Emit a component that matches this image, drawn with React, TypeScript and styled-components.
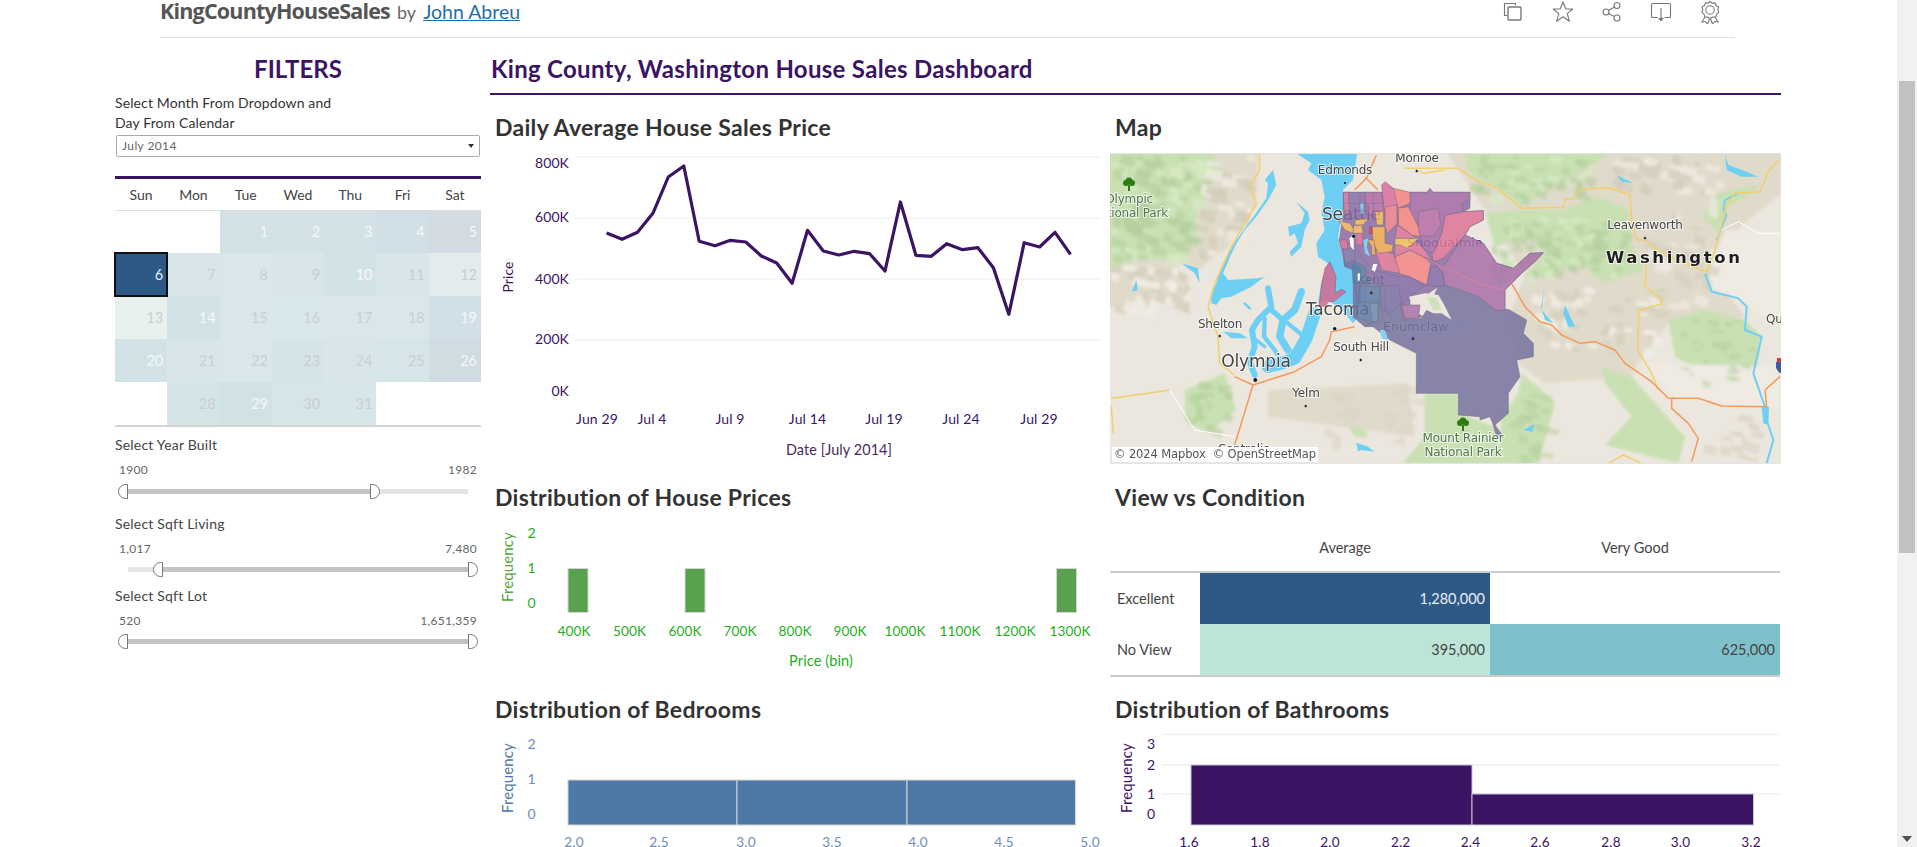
import React from "react";
import styled, { createGlobalStyle } from "styled-components";

const FONT = `"Lato", "Open Sans", "Liberation Sans", sans-serif`;
const PURPLE = "#3b1464";

const Global = createGlobalStyle`
  html, body { margin: 0; padding: 0; background: #fff; overflow: hidden; }
  body { font-family: ${FONT}; }
`;

const Shell = styled.div`display:flex;width:1917px;height:847px;overflow:hidden;background:#fff;`;
const Page = styled.div`flex:0 0 1897px;height:847px;overflow:hidden;`;
const ScrollTrack = styled.div`flex:0 0 20px;height:847px;background:#f1f1f1;position:relative;`;
const ScrollThumb = styled.div`position:absolute;left:2px;top:81px;width:16px;height:472px;background:#c1c1c1;`;
const ScrollArrow = styled.div`position:absolute;left:5px;top:836px;width:0;height:0;border-left:5px solid transparent;border-right:5px solid transparent;border-top:6px solid #505050;`;

const Header = styled.header`display:flex;justify-content:space-between;align-items:flex-start;height:37px;margin:0 162px 0 160px;border-bottom:1px solid #e0e0e0;`;
const Brand = styled.div`display:flex;align-items:baseline;gap:7px;line-height:22px;`;
const BrandName = styled.span`font:700 21.5px/22px "Open Sans", sans-serif;letter-spacing:-.8px;color:#555;`;
const BrandBy = styled.span`font:400 18px/22px ${FONT};color:#666;`;
const BrandLink = styled.a`font:400 19.5px/22px ${FONT};color:#1f6fa8;text-decoration:underline;`;
const IconRow = styled.div`display:flex;gap:25px;padding:0 13px 0 0;`;
const IconBox = styled.svg`width:24px;height:24px;fill:none;stroke:#777;stroke-width:1.1;display:block;`;

const Body = styled.div`display:flex;gap:9px;padding:17px 0 0 115px;`;
const Side = styled.aside`flex:0 0 366px;display:flex;flex-direction:column;`;
const FilterTitle = styled.h2`margin:0;text-align:center;font:700 24px/28px ${FONT};color:${PURPLE};`;
const MonthLabel = styled.div`margin-top:10px;font:400 14px/20px ${FONT};letter-spacing:.12px;color:#333;`;
const SelectBox = styled.div`display:flex;justify-content:space-between;align-items:center;height:22px;margin:2px 1px 0;padding:0 5px;box-sizing:border-box;border:1px solid #aaa;border-radius:2px;font:400 12px/20px ${FONT};letter-spacing:.4px;color:#666;`;
const Caret = styled.span`width:0;height:0;border-left:3.5px solid transparent;border-right:3.5px solid transparent;border-top:4px solid #333;`;
const PurpleRule = styled.div`height:3px;margin-top:19px;background:${PURPLE};`;
const DayHead = styled.div`display:grid;grid-template-columns:repeat(7,1fr);height:31px;align-items:center;border-bottom:1px solid #ddd;`;
const DayName = styled.div`text-align:center;font:400 14px/20px ${FONT};color:#444;`;
const Cal = styled.div`display:grid;grid-template-columns:repeat(7,1fr);grid-template-rows:42px repeat(4,43px);border-bottom:2px solid #d4d4d4;`;
const Cell = styled.div<{ $bg: string; $fg: string; $sel?: boolean }>`
  position:relative;display:flex;align-items:center;justify-content:flex-end;padding-right:4px;
  background:${(p) => p.$bg};color:${(p) => p.$fg};font:400 14.5px/20px ${FONT};
  ${(p) => (p.$sel ? "outline:2px solid #111;outline-offset:-1px;z-index:1;" : "")}
`;
const SliderBlock = styled.div<{ $top: number }>`margin-top:${(p) => p.$top}px;display:flex;flex-direction:column;`;
const SliderLabel = styled.div`font:400 14px/20px ${FONT};letter-spacing:.2px;color:#444;`;
const SliderVals = styled.div`display:flex;justify-content:space-between;padding:0 4px;margin-top:7px;font:400 12px/16px ${FONT};letter-spacing:.3px;color:#666;`;
const SliderArea = styled.div<{ $clip?: boolean; $m: number }>`position:relative;margin:${(p) => p.$m}px 13px 0;height:${(p) => (p.$clip ? 15 : 16)}px;${(p) => (p.$clip ? "overflow-y:clip;" : "")}`;
const SliderBase = styled.div`position:absolute;left:0;right:0;top:5px;height:5px;background:#e5e5e5;`;
const SliderFill = styled.div<{ $l: number; $r: number }>`position:absolute;left:${(p) => p.$l}px;width:${(p) => p.$r - p.$l}px;top:5px;height:5px;background:#c4c4c4;`;
const Thumb = styled.div<{ $x: number; $side: "l" | "r" }>`
  position:absolute;top:0;box-sizing:border-box;width:10px;height:15px;background:#fff;border:1.2px solid #777;
  left:${(p) => (p.$side === "l" ? p.$x - 10 : p.$x)}px;
  border-radius:${(p) => (p.$side === "l" ? "8px 0 0 8px" : "0 8px 8px 0")};
`;

const Main = styled.main`flex:0 0 1291px;`;
const MainTitle = styled.h1`margin:0;height:38px;box-sizing:content-box;padding-left:1px;border-bottom:2px solid ${PURPLE};font:700 24px/28px ${FONT};letter-spacing:.3px;color:${PURPLE};`;
const Grid = styled.div`display:grid;grid-template-columns:610px 671px;column-gap:10px;grid-template-rows:370px 212px 212px;margin-top:17px;`;
const Panel = styled.section`min-width:0;`;
const PanelTitle = styled.h3`margin:0;height:30px;padding-left:5px;font:700 23px/30px ${FONT};letter-spacing:.3px;color:#333;`;
const ChartSvg = styled.svg`display:block;`;
const T = styled.text<{ $c: string; $s?: number }>`fill:${(p) => p.$c};font:400 ${(p) => p.$s ?? 14}px ${FONT};letter-spacing:.1px;`;

const MapWrap = styled.div`position:relative;margin-top:11px;width:671px;height:311px;overflow:hidden;border-top:1px solid #e4e4e4;border-bottom:1px solid #e4e4e4;box-sizing:border-box;`;
const Attribution = styled.div`position:absolute;left:2px;bottom:1px;height:15px;padding:0 2px;background:rgba(255,255,255,.95);font:400 11.5px/15px "DejaVu Sans", sans-serif;letter-spacing:-.12px;color:#555;white-space:pre;`;
const MapLabel = styled.text<{ $s?: number; $c?: string; $w?: number; $ls?: number }>`
  font:${(p) => p.$w ?? 400} ${(p) => p.$s ?? 12}px "DejaVu Sans", sans-serif;fill:${(p) => p.$c ?? "#444"};
  letter-spacing:${(p) => p.$ls ?? -0.2}px;paint-order:stroke;stroke:rgba(255,255,255,.7);stroke-width:2px;
`;

const HeatTable = styled.div`display:grid;grid-template-columns:90px 290px 290px;grid-template-rows:61px 51px 53px;width:670px;`;
const HeatHead = styled.div`display:flex;align-items:center;justify-content:center;padding-top:12px;box-sizing:border-box;border-bottom:2px solid #ccc;font:400 14.5px/16px ${FONT};color:#444;`;
const RowHead = styled.div<{ $last?: boolean }>`display:flex;align-items:center;padding-left:7px;font:400 14.5px/16px ${FONT};color:#444;${(p) => (p.$last ? "border-bottom:2px solid #ccc;" : "")}`;
const HeatCell = styled.div<{ $bg: string; $fg: string; $last?: boolean }>`display:flex;align-items:center;justify-content:flex-end;padding-right:5px;background:${(p) => p.$bg};color:${(p) => p.$fg};font:400 14.5px/16px ${FONT};${(p) => (p.$last ? "border-bottom:2px solid #ccc;" : "")}`;

const line: [number, number][] = [[295,369],[334,388],[373,367],[412,310],[451,201],[490,168],[529,394],[569,407],[608,391],[647,396],[686,438],[725,459],[764,520],[803,361],[843,423],[882,435],[921,424],[960,431],[999,483],[1038,276],[1077,436],[1116,439],[1155,401],[1195,419],[1234,413],[1273,473],[1312,613],[1351,398],[1390,411],[1429,367],[1468,433]];
const linePts = line.map(([x, y]) => `${(490 + x / 2.529).toFixed(1)},${(110 + y / 3).toFixed(1)}`).join(" ");

const pts = (a: number[]) => {
  const out: string[] = [];
  for (let i = 0; i < a.length; i += 2) out.push(`${a[i]},${a[i + 1]}`);
  return out.join(" ");
};
function facets(seed: number, x0: number, y0: number, x1: number, y1: number, n: number, size: number) {
  let s = seed * 7919;
  const r = () => { s = (s * 16807) % 2147483647; return s / 2147483647; };
  const out: string[] = [];
  for (let i = 0; i < n; i++) {
    const x = x0 + r() * (x1 - x0), y = y0 + r() * (y1 - y0);
    const a = size * (0.5 + r()), b = size * (0.5 + r());
    out.push(`${x.toFixed(0)},${y.toFixed(0)} ${(x + a).toFixed(0)},${(y + b * 0.3).toFixed(0)} ${(x + a * 0.8).toFixed(0)},${(y + b).toFixed(0)} ${(x - a * 0.2).toFixed(0)},${(y + b * 0.7).toFixed(0)}`);
  }
  return out;
}

const WATER = "#6ecff5";
const BASE = "#ece7de";
const TAN = "#e0dacb";
const GRN = "#c9e0b3";
const GRN2 = "#b3cf9b";
const GRN3 = "#d9ebc7";

const Z8 = "translate(1108 150) scale(.33333)";
const Z9 = "translate(1445 150) scale(.33333)";
const Z10 = "translate(1310 170) scale(.33333)";

const county: [string, number[]][] = [
  ["#8b6ba5", [100,67,480,67,480,115,460,125,520,122,520,150,480,170,465,195,520,220,560,280,610,295,660,250,700,248,680,270,640,305,605,340,585,360,585,420,555,420,505,380,450,360,405,345,385,350,340,380,300,380,300,420,340,440,280,450,235,450,190,470,165,470,130,440,130,300,105,290,88,210,100,130]],
  ["#74729f", [130,300,140,380,130,440,165,470,180,462,195,475,240,510,319,550,319,670,445,670,445,735,510,740,510,750,540,740,550,765,560,800,580,800,555,765,595,730,595,670,630,620,620,570,670,560,670,520,640,490,650,450,595,418,555,420,505,380,450,360,405,345,385,350,350,420,335,445,280,450,270,400,230,350]],
  ["#8069a6", [190,300,270,320,300,320,340,345,385,350,405,345,395,290,365,290,345,345,300,380,280,400,270,400,235,350,195,340]],
  ["#a96da7", [365,270,400,290,465,195,520,220,560,280,610,295,660,250,700,248,680,270,640,305,605,340,585,360,585,420,555,420,505,380,450,360,405,345,400,310]],
  ["#dd7397", [365,250,395,190,405,135,460,125,520,122,520,150,480,170,465,195,400,265,370,275]],
  ["#a268a6", [300,67,350,67,360,55,370,67,480,67,480,90,455,100,460,125,405,135,395,190,370,250,340,235,325,170,300,120]],
  ["#b56ca6", [325,125,385,115,392,165,370,200,325,195]],
  ["#a870a8", [275,405,330,405,325,445,285,445]],
  ["#f58584", [255,260,300,240,340,260,362,280,350,345,300,320,265,310]],
  ["#dc7296", [195,240,250,250,270,310,240,305,215,300,205,270]],
  ["#d96d9d", [215,45,225,35,250,55,260,70,265,115,260,155,225,150,220,100]],
  ["#f5827f", [250,55,300,67,300,100,265,115]],
  ["#f5827f", [265,115,295,110,325,170,330,200,305,195,265,165]],
  ["#ea7b8d", [225,110,260,105,262,160,232,190,225,170]],
  ["#dd7397", [262,165,305,195,320,205,255,205]],
  ["#dd7397", [255,225,320,215,340,235,365,270,340,260,300,240,255,260]],
  ["#b368a5", [165,67,215,67,225,150,170,130]],
  ["#8a6aa5", [100,67,165,67,170,130,120,148,103,130]],
  ["#cd6f9d", [100,67,115,67,118,130,103,130]],
  ["#d46b94", [138,190,158,190,158,225,138,225]],
  ["#efb059", [195,125,220,125,220,165,200,165]],
  ["#efb059", [85,152,120,160,135,185,125,188,105,180]],
  ["#efb059", [135,150,175,145,160,165,135,165]],
  ["#efb059", [130,168,155,165,160,190,130,190]],
  ["#eea750", [185,170,225,170,225,220,250,225,245,245,205,250,190,220]],
  ["#eea750", [172,210,192,210,197,255,185,255,185,230]],
  ["#f0bb56", [255,205,325,205,310,220,290,235,270,225,255,225]],
  ["#c8314f", [178,170,187,170,187,192,178,192]],
  ["#d8688f", [88,210,110,210,115,240,95,235]],
  ["#7e70a6", [100,240,135,230,160,270,190,300,170,310,125,270,105,290]],
  ["#5b759f", [125,270,165,290,170,320,180,340,130,340]],
  ["#6079a6", [150,345,210,350,205,455,180,460,140,440]],
  ["#6a86ab", [180,400,205,400,205,455,185,455]],
  ["#7a6ea5", [210,350,265,345,275,400,240,430,215,420]],
  ["#d8688f", [60,275,78,320,75,370,95,358,108,365,70,395,55,395,45,410,28,405,35,340,45,295]],
];

const Tree: React.FC<{ x: number; y: number }> = ({ x, y }) => (
  <g fill="#2e7d12">
    <circle cx={x - 3} cy={y - 2} r="3" /><circle cx={x + 3} cy={y - 2} r="3" /><circle cx={x} cy={y - 4} r="3.5" />
    <rect x={x - 1} y={y} width="2" height="6" />
  </g>
);
const Dot: React.FC<{ x: number; y: number; r?: number }> = ({ x, y, r = 1.5 }) => <circle cx={x} cy={y} r={r} fill="#111" stroke="#fff" strokeWidth=".5" />;

const MapDrawing = () => (
  <ChartSvg width="671" height="309" viewBox="1110 154 671 309">
    <defs>
      <filter id="soft" x="-5%" y="-5%" width="110%" height="110%"><feGaussianBlur stdDeviation="1.5" /></filter>
      <filter id="tiny" x="-5%" y="-5%" width="110%" height="110%"><feGaussianBlur stdDeviation=".35" /></filter>
    </defs>
    <rect x="1110" y="154" width="671" height="310" fill={BASE} />
    <g filter="url(#soft)">
      <g transform={Z8}>
        <polygon fill={TAN} points={pts([300,0,450,0,445,170,360,290,270,360,200,330,250,420,100,480,0,470,0,350])} />
        <polygon fill={GRN} points={pts([0,0,310,0,340,60,300,130,270,170,240,330,170,330,80,330,0,360])} />
        <polygon fill={GRN} points={pts([230,720,350,670,385,780,300,850,230,810])} />
        <polygon fill={GRN} points={pts([950,730,1020,730,1020,945,880,945,950,860])} />
        <polygon fill={TAN} points={pts([480,720,900,700,920,860,700,830,480,800])} />
        <polygon fill={GRN} points={pts([720,830,770,835,780,865,740,860])} />
        {facets(11, 10, 10, 280, 320, 110, 34).map((p, i) => <polygon key={i} fill={i % 3 ? GRN2 : GRN3} opacity=".6" points={p} />)}
        {facets(12, 270, 10, 420, 300, 40, 34).map((p, i) => <polygon key={i} fill={i % 2 ? "#d3ccb9" : "#efeae0"} opacity=".8" points={p} />)}
        {facets(13, 10, 340, 230, 470, 40, 30).map((p, i) => <polygon key={i} fill={i % 2 ? "#d6cfbd" : "#f2eee5"} opacity=".8" points={p} />)}
        {facets(15, 240, 690, 360, 830, 20, 24).map((p, i) => <polygon key={i} fill={GRN2} opacity=".6" points={p} />)}
        {facets(14, 650, 690, 930, 880, 26, 30).map((p, i) => <polygon key={i} fill="#dcd5c5" opacity=".6" points={p} />)}
      </g>
      <g transform={Z9}>
        <polygon fill={TAN} points={pts([0,0,1010,0,1010,130,850,260,800,370,900,500,670,520,580,640,560,680,300,700,220,640,190,500,240,380,120,180])} />
        <polygon fill={GRN} points={pts([60,0,500,0,430,60,340,100,230,170,150,110,100,90,60,50])} />
        <polygon fill={GRN} points={pts([120,190,235,180,350,180,460,140,550,180,560,280,600,360,480,400,400,340,300,380,240,380,300,310,250,260,150,290])} />
        <polygon fill={GRN} points={pts([670,510,780,480,900,510,950,560,930,680,950,760,800,730,780,670,690,620])} />
        <polygon fill={GRN} points={pts([470,650,560,680,720,860,700,940,480,885,560,800,480,700])} />
        <polygon fill={GRN} points={pts([230,670,290,720,330,760,280,945,160,945,170,800,220,730])} />
        <polygon fill={GRN} points={pts([820,130,950,100,920,130,850,170,820,250,770,200])} />
        <polygon fill={GRN} points={pts([0,730,40,730,40,790,150,830,170,945,0,945])} />
        <polygon fill="#efebe3" points={pts([600,640,1000,650,1000,780,690,745])} />
        <polygon fill="#efebe3" points={pts([840,240,1010,250,1010,500,950,500,880,440,800,420,790,370])} />
        {facets(21, 130, 190, 540, 370, 90, 26).map((p, i) => <polygon key={i} fill={i % 3 ? GRN2 : GRN3} opacity=".6" points={p} />)}
        {facets(27, 70, 10, 430, 140, 50, 26).map((p, i) => <polygon key={i} fill={i % 3 ? GRN2 : GRN3} opacity=".6" points={p} />)}
        {facets(22, 500, 10, 820, 120, 36, 32).map((p, i) => <polygon key={i} fill={i % 2 ? "#d3ccb9" : "#efeae0"} opacity=".8" points={p} />)}
        {facets(23, 260, 400, 660, 600, 60, 26).map((p, i) => <polygon key={i} fill={i % 2 ? "#d6cfbd" : "#f2eee5"} opacity=".8" points={p} />)}
        {facets(24, 600, 140, 800, 460, 30, 30).map((p, i) => <polygon key={i} fill={i % 2 ? "#d6cfbd" : "#f0ebe2"} opacity=".7" points={p} />)}
        {facets(25, 680, 500, 920, 690, 30, 20).map((p, i) => <polygon key={i} fill={GRN2} opacity=".45" points={p} />)}
        {facets(28, 200, 700, 320, 930, 26, 26).map((p, i) => <polygon key={i} fill={GRN2} opacity=".5" points={p} />)}
        {facets(26, 770, 790, 950, 930, 14, 30).map((p, i) => <polygon key={i} fill="#dbd4c3" opacity=".7" points={p} />)}
      </g>
    </g>
    <g filter="url(#tiny)">
      <g transform={Z8} fill={WATER}>
        <polygon points={pts([565,10,610,40,600,60,640,90,650,140,640,190,650,240,625,280,630,320,660,340,640,400,630,460,660,450,690,470,710,490,735,520,750,500,760,450,760,350,705,330,690,260,705,180,705,120,735,90,748,10])} />
        <polygon points={pts([565,155,600,185,605,210,590,240,580,290,550,320,545,305,570,280,560,250,545,260,540,230,580,220,590,190])} />
        <polygon points={pts([495,60,505,105,480,150,445,200,410,240,380,290,345,370,360,390,450,385,470,380,430,410,370,440,340,445,325,465,310,460,310,430,325,400,345,340,385,270,440,195,475,145,480,100,470,90])} />
        <polygon points={pts([220,340,270,355,275,400,260,370])} />
        <polygon points={pts([85,390,72,425,90,420])} />
        <polygon points={pts([745,878,780,890,800,905,760,900,750,905])} />
        <polygon points={pts([345,545,395,550,420,565,370,565])} />
      </g>
      <g transform={Z8} stroke={WATER} fill="none" strokeLinejoin="round" strokeLinecap="round">
        <polyline strokeWidth="38" points={pts([620,490,595,565,560,625,520,640,480,650])} />
        <polyline strokeWidth="22" points={pts([580,425,560,480,525,510,515,560,540,600])} />
        <polyline strokeWidth="18" points={pts([480,415,490,470,450,510,432,540,440,590,425,635,440,675])} />
        <polyline strokeWidth="16" points={pts([490,480,525,510])} />
        <polyline strokeWidth="13" points={pts([470,505,468,560,500,600,520,635])} />
        <polyline strokeWidth="13" points={pts([540,520,595,565])} />
        <polyline strokeWidth="10" points={pts([432,560,470,590])} />
        <polyline strokeWidth="8" points={pts([410,460,425,475])} />
      </g>
      <g transform={Z9} fill={WATER}>
        <polygon points={pts([840,15,850,45,890,60,940,80,890,80,845,60])} />
        <polygon points={pts([515,75,565,100,530,95])} />
        <polygon points={pts([298,415,290,480,325,520,300,510,288,470])} />
        <polygon points={pts([360,465,390,530,370,530,355,490])} />
        <polygon points={pts([950,770,972,770,970,825,955,820])} />
        <polygon points={pts([235,840,268,822,262,845])} />
        <polyline fill="none" stroke={WATER} strokeWidth="6" points={pts([780,370,800,425,880,445,905,470,900,540,950,560,925,670,960,770,965,810,985,870,965,940])} />
        <polyline fill="none" stroke={WATER} strokeWidth="5" points={pts([880,130,840,150,835,180,845,195,815,270])} />
      </g>
      <g fill="none" strokeWidth="4.5" strokeLinejoin="round" transform={Z9}>
        <polyline stroke="#f2cf6e" points={pts([-120,55,0,55,40,55,100,95,150,110,230,175,355,172,360,148,385,148,405,118,490,113,555,135,560,210,575,270,600,270,650,310,730,345,785,365,810,300,845,165,870,130,945,125,970,65,1000,30])} />
        <polyline stroke="#f2cf6e" points={pts([605,340,600,410,650,445,650,462,582,480,578,600,620,670,640,720])} />
        <polyline stroke="#f2cf6e" points={pts([490,940,535,915,590,940])} />
        <polyline stroke="#f49a58" points={pts([200,400,240,470,285,515,320,525,350,555,405,580,450,575,510,600,540,640,620,695,670,745,760,745,830,768,965,770,960,720,1005,680])} />
        <polyline stroke="#f49a58" points={pts([680,745,680,775,730,820,760,865,740,935])} />
        <polyline stroke="#fff" strokeWidth="3" points={pts([830,240,880,215,940,250,1005,250])} />
      </g>
      <g fill="none" strokeWidth="4.5" strokeLinejoin="round" transform={Z8}>
        <polyline stroke="#f2cf6e" points={pts([455,10,455,60,425,110,445,160,370,290,320,400,300,470,330,560,335,640,380,675])} />
        <polyline stroke="#f2cf6e" points={pts([10,745,120,730,185,720])} />
        <polyline stroke="#f2cf6e" points={pts([10,770,16,850])} />
        <polyline stroke="#fff" strokeWidth="3" points={pts([185,720,260,840,380,860])} />
        <polyline stroke="#f49a58" points={pts([380,885,435,705,380,680])} />
        <polyline stroke="#f49a58" points={pts([435,705,560,665,640,620,665,570,670,545,740,530])} />
        <polyline stroke="#f49a58" points={pts([740,120,775,85,810,120])} />
        <polyline stroke="#f49a58" points={pts([775,85,805,15])} />
        <polyline stroke="#f2cf6e" points={pts([925,60,950,70,1010,60])} />
      </g>
    </g>
    <MapLabel x="1322" y="220" $s={17}>Seattle</MapLabel>
    <MapLabel x="1306" y="315" $s={17}>Tacoma</MapLabel>
    <MapLabel x="1358" y="284" $s={12}>Kent</MapLabel>
    <MapLabel x="1383" y="331" $s={12.5} $ls={0.2}>Enumclaw</MapLabel>
    <MapLabel x="1407" y="247" $s={12.5} $ls={0.2}>Snoqualmie</MapLabel>
    <MapLabel x="1345" y="174" $s={12} textAnchor="middle">Edmonds</MapLabel>
    <MapLabel x="1417" y="162" $s={12} textAnchor="middle">Monroe</MapLabel>
    <Dot x={1345} y={183} />
    <Dot x={1416.7} y={171} />
    <g opacity=".84" transform={Z10} filter="url(#tiny)" stroke="#5d5770" strokeWidth="1.6" strokeLinejoin="round">
      {county.map(([c, p], i) => <polygon key={i} fill={c} points={pts(p)} />)}
      <polygon fill={WATER} stroke="none" points={pts([160,210,175,205,170,230,180,260,165,250])} />
      <polygon fill={WATER} stroke="none" points={pts([150,100,160,100,160,132,152,130])} />
      <polygon fill={WATER} stroke="none" points={pts([210,480,225,480,235,510,215,505])} />
      <polygon fill="#fff" stroke="none" points={pts([143,310,150,310,150,332,143,332])} />
      <polygon fill="#fff" stroke="none" points={pts([190,282,202,282,195,305,185,300])} />
      <polygon fill="#fff" stroke="none" points={pts([118,205,130,195,132,240,122,230])} />
      <polygon fill={BASE} stroke="none" points={pts([297,380,345,370,385,375,400,400,425,450,395,430,370,430,350,420,330,395,300,390])} />
      <polygon fill={GRN} stroke="none" points={pts([350,380,380,385,395,420,370,420])} />
      <polyline fill="none" stroke="#e0788f" strokeWidth="2" points={pts([320,255,365,275,400,290,460,320,520,345,585,360])} />
      <polyline fill="none" stroke="#3f7fc0" strokeWidth="2" points={pts([420,450,445,475])} />
      <g fill="none" strokeWidth="1.4">
        <polyline points={pts([165,345,165,455])} />
        <polyline points={pts([145,395,205,395])} />
        <polyline points={pts([225,360,225,420,245,440])} />
        <polyline points={pts([135,240,135,300])} />
        <polyline points={pts([150,67,150,130])} />
        <polyline points={pts([190,67,190,130])} />
        <polyline points={pts([105,100,215,100])} />
      </g>
    </g>
    <Dot x={1353.7} y={236.3} r={2} />
    <Dot x={1334.7} y={328.7} r={2} />
    <Dot x={1255.3} y={380} r={2.2} />
    <Dot x={1219.7} y={336} />
    <Dot x={1360.7} y={360} />
    <Dot x={1305.7} y={406} />
    <Dot x={1645} y={238} />
    <circle cx="1413" cy="338.7" r="1.4" fill="#333" />
    <circle cx="1371.3" cy="293" r="1.4" fill="#333" />
    <Tree x={1129} y={185} />
    <Tree x={1463} y={425} />
    <MapLabel x="1153" y="203" textAnchor="end" $c="#4d7a4d">Olympic</MapLabel>
    <MapLabel x="1168" y="217" textAnchor="end" $c="#4d7a4d">National Park</MapLabel>
    <MapLabel x="1463" y="442" textAnchor="middle" $c="#4d7a4d">Mount Rainier</MapLabel>
    <MapLabel x="1463" y="456" textAnchor="middle" $c="#4d7a4d">National Park</MapLabel>
    <MapLabel x="1220" y="328" textAnchor="middle">Shelton</MapLabel>
    <MapLabel x="1256" y="367" textAnchor="middle" $s={17}>Olympia</MapLabel>
    <MapLabel x="1361" y="351" textAnchor="middle">South Hill</MapLabel>
    <MapLabel x="1306" y="397" textAnchor="middle">Yelm</MapLabel>
    <MapLabel x="1244" y="453" textAnchor="middle">Centralia</MapLabel>
    <MapLabel x="1645" y="229" textAnchor="middle" $s={12}>Leavenworth</MapLabel>
    <MapLabel x="1606" y="263" $s={16.5} $c="#1e1e1e" $w={700} $ls={2.6}>Washington</MapLabel>
    <MapLabel x="1766" y="323" $s={12}>Qu</MapLabel>
    <rect x="1777" y="358" width="6" height="6" fill="#d23c3c" />
    <path d="M1776 362h7v12q-4 0-7-6z" fill="#3c5aa6" />
  </ChartSvg>
);

const LineChart = () => {
  const c = "#3b1464";
  return (
    <ChartSvg width="610" height="340" viewBox="490 142 610 340">
      {[157, 218, 279, 340].map((y) => <line key={y} x1="575" x2="1100" y1={y} y2={y} stroke="#f3f3f3" strokeWidth="1.5" />)}
      {[["800K", 163], ["600K", 217], ["400K", 279], ["200K", 339], ["0K", 391]].map(([t, y]) => (
        <T key={t as string} x="569" y={(y as number) + 5} textAnchor="end" $c={c}>{t}</T>
      ))}
      {[["Jun 29", 597], ["Jul 4", 652], ["Jul 9", 730], ["Jul 14", 807.5], ["Jul 19", 884], ["Jul 24", 961], ["Jul 29", 1039]].map(([t, x]) => (
        <T key={t as string} x={x as number} y="424" textAnchor="middle" $c={c}>{t}</T>
      ))}
      <T x="839" y="455" textAnchor="middle" $c="#4a2a5e" $s={14.4}>Date [July 2014]</T>
      <T x="0" y="0" textAnchor="middle" $c={c} transform="translate(513 277) rotate(-90)">Price</T>
      <polyline points={linePts} fill="none" stroke={c} strokeWidth="3.2" strokeLinejoin="round" />
    </ChartSvg>
  );
};

const Histogram: React.FC<{
  c: string; axis: string; top: number; h: number;
  yTicks: [string, number][]; grid?: number[]; bars: { x0: number; x1: number; y: number }[]; bottom: number;
  xTicks: [string, number][]; xY: number; yX: number; fx: number; fy: number; edge: string; xTitle?: [string, number, number]; gridFrom?: number; freqColor?: string;
  vbx: number; w: number;
}> = ({ c, axis, top, h, yTicks, grid = [], bars, bottom, xTicks, xY, yX, fx, fy, edge, xTitle, gridFrom = 575, vbx, w, freqColor }) => (
  <ChartSvg width={w} height={h} viewBox={`${vbx} ${top} ${w} ${h}`}>
    {grid.map((y) => <line key={y} x1={gridFrom} x2={vbx + w} y1={y} y2={y} stroke="#f1f1f1" strokeWidth="1.5" />)}
    {yTicks.map(([t, y]) => <T key={t} x={yX} y={y + 5} textAnchor="middle" $c={axis} $s={14}>{t}</T>)}
    <T x="0" y="0" textAnchor="middle" $c={freqColor ?? axis} $s={15} transform={`translate(${fx} ${fy}) rotate(-90)`}>Frequency</T>
    {bars.map((b, i) => <rect key={i} x={b.x0} y={b.y} width={b.x1 - b.x0} height={bottom - b.y} fill={c} stroke={edge} strokeWidth="1" />)}
    {xTicks.map(([t, x]) => <T key={t} x={x} y={xY} textAnchor="middle" $c={axis} $s={13.6}>{t}</T>)}
    {xTitle && <T x={xTitle[1]} y={xTitle[2]} textAnchor="middle" $c={axis} $s={14.5}>{xTitle[0]}</T>}
  </ChartSvg>
);

const W = "rgba(255,255,255,.8)";
const G = "#c9ced0";
type C = { d?: number; bg?: string; fg?: string; sel?: boolean };
const calendar: C[] = [
  {}, {},
  { d: 1, bg: "#d1e1e6", fg: W }, { d: 2, bg: "#d3e2e7", fg: W }, { d: 3, bg: "#d3e2e7", fg: W }, { d: 4, bg: "#d0dfe5", fg: W }, { d: 5, bg: "#d2dae2", fg: W },
  { d: 6, bg: "#2c5985", fg: "#e8eef3", sel: true }, { d: 7, bg: "#d8e6e9", fg: G }, { d: 8, bg: "#d9e7ea", fg: G }, { d: 9, bg: "#d8e6e9", fg: G }, { d: 10, bg: "#d2e3e6", fg: W }, { d: 11, bg: "#d8e6e9", fg: G }, { d: 12, bg: "#e2ecec", fg: G },
  { d: 13, bg: "#e9f1ef", fg: G }, { d: 14, bg: "#d0e2e6", fg: W }, { d: 15, bg: "#d9e7ea", fg: G }, { d: 16, bg: "#d8e7ea", fg: G }, { d: 17, bg: "#d9e7ea", fg: G }, { d: 18, bg: "#d9e7ea", fg: G }, { d: 19, bg: "#d0e0e6", fg: W },
  { d: 20, bg: "#d2e3e8", fg: W }, { d: 21, bg: "#d8e6e9", fg: G }, { d: 22, bg: "#d9e7ea", fg: G }, { d: 23, bg: "#d5e4e7", fg: G }, { d: 24, bg: "#d8e6e9", fg: G }, { d: 25, bg: "#d6e5e8", fg: G }, { d: 26, bg: "#d0dce2", fg: W },
  {}, { d: 28, bg: "#d4e5e9", fg: G }, { d: 29, bg: "#d0e2e6", fg: W }, { d: 30, bg: "#d6e5e9", fg: G }, { d: 31, bg: "#d7e6e9", fg: G }, {}, {},
];

const Slider: React.FC<{ label: string; lo: string; hi: string; a: number; b: number; top: number; m: number; clip?: boolean }> = ({ label, lo, hi, a, b, top, m, clip }) => (
  <SliderBlock $top={top}>
    <SliderLabel>{label}</SliderLabel>
    <SliderVals><span>{lo}</span><span>{hi}</span></SliderVals>
    <SliderArea $clip={clip} $m={m}>
      <SliderBase />
      <SliderFill $l={a} $r={b} />
      <Thumb $x={a} $side="l" />
      <Thumb $x={b} $side="r" />
    </SliderArea>
  </SliderBlock>
);

export default function App() {
  return (
    <>
      <Global />
      <Shell>
        <Page>
          <Header>
            <Brand>
              <BrandName>KingCountyHouseSales</BrandName>
              <BrandBy>by</BrandBy>
              <BrandLink>John Abreu</BrandLink>
            </Brand>
            <IconRow>
              <IconBox viewBox="0 0 24 24"><path d="M13.500 5.500V3.500H2.500v12h3" /><rect x="6" y="7" width="13" height="13" rx="1" strokeWidth="1.4" /></IconBox>
              <IconBox viewBox="0 0 24 24"><path d="M12 2l2.800 7h7l-5.600 4.600 2.200 7.600L12 16.800l-6.400 4.400 2.200-7.600L2.200 9h7z" strokeLinejoin="round" /></IconBox>
              <IconBox viewBox="0 0 24 24"><circle cx="6" cy="12" r="3" /><circle cx="17" cy="5.500" r="3" /><circle cx="17" cy="18" r="3" /><path d="M8.600 10.500l5.800-3.500M8.600 13.500l5.800 3" /></IconBox>
              <IconBox viewBox="0 0 24 24"><path d="M8.500 17.500H3.500a1 1 0 0 1-1-1V4.500a1 1 0 0 1 1-1h17a1 1 0 0 1 1 1v12a1 1 0 0 1-1 1h-5" /><path d="M12 8v12" /><path d="M9 18h6l-3 3.500z" fill="#777" stroke="none" /></IconBox>
              <IconBox viewBox="0 0 24 24"><path d="M12 1.500l2.300 1.700 2.800-.3 1 2.700 2.400 1.400-.7 2.800.9 2.600-2.200 1.800-.7 2.700-2.900.1L12 18.500l-2.300-1.500-2.900-.1-.7-2.700-2.200-1.800.9-2.600-.7-2.800 2.400-1.400 1-2.700 2.800.3z" /><circle cx="12" cy="10" r="4.200" /><path d="M7 17l-3 5 3.500-.5 2 2.500 2-5M17 17l3 5-3.500-.5-2 2.500-2-5" /></IconBox>
            </IconRow>
          </Header>
          <Body>
            <Side>
              <FilterTitle>FILTERS</FilterTitle>
              <MonthLabel>Select Month From Dropdown and<br />Day From Calendar</MonthLabel>
              <SelectBox>July 2014<Caret /></SelectBox>
              <PurpleRule />
              <DayHead>{["Sun", "Mon", "Tue", "Wed", "Thu", "Fri", "Sat"].map((d) => <DayName key={d}>{d}</DayName>)}</DayHead>
              <Cal>
                {calendar.map((c, i) => (
                  <Cell key={i} $bg={c.bg ?? "#fff"} $fg={c.fg ?? "#fff"} $sel={c.sel}>{c.d}</Cell>
                ))}
              </Cal>
              <Slider label="Select Year Built" lo="1900" hi="1982" a={0} b={242} top={8} m={6} />
              <Slider label="Select Sqft Living" lo="1,017" hi="7,480" a={35} b={340} top={14} m={5} clip />
              <Slider label="Select Sqft Lot" lo="520" hi="1,651,359" a={0} b={340} top={9} m={5} />
            </Side>
            <Main>
              <MainTitle>King County, Washington House Sales Dashboard</MainTitle>
              <Grid>
                <Panel>
                  <PanelTitle>Daily Average House Sales Price</PanelTitle>
                  <LineChart />
                </Panel>
                <Panel>
                  <PanelTitle>Map</PanelTitle>
                  <MapWrap>
                    <MapDrawing />
                    <Attribution>© 2024 Mapbox  © OpenStreetMap</Attribution>
                  </MapWrap>
                </Panel>
                <Panel>
                  <PanelTitle>Distribution of House Prices</PanelTitle>
                  <Histogram
                    vbx={490} w={610} top={512} h={182} c="#59a14f" axis="#1cb01c" edge="#d4d4d4" freqColor="#4fa83a"
                    yTicks={[["2", 533], ["1", 568], ["0", 603]]} bottom={612.5}
                    bars={[{ x0: 568, x1: 588, y: 568.5 }, { x0: 685, x1: 705, y: 568.5 }, { x0: 1056.5, x1: 1076.5, y: 568.5 }]}
                    xTicks={[["400K", 574], ["500K", 629.6], ["600K", 685], ["700K", 740], ["800K", 795], ["900K", 850], ["1000K", 905], ["1100K", 960], ["1200K", 1015], ["1300K", 1070]]}
                    xY={636} yX={531.5} fx={513} fy={567} xTitle={["Price (bin)", 821, 666]}
                  />
                </Panel>
                <Panel>
                  <PanelTitle>View vs Condition</PanelTitle>
                  <HeatTable>
                    <HeatHead />
                    <HeatHead>Average</HeatHead>
                    <HeatHead>Very Good</HeatHead>
                    <RowHead>Excellent</RowHead>
                    <HeatCell $bg="#2c5985" $fg="#e8eef3">1,280,000</HeatCell>
                    <HeatCell $bg="#fff" $fg="#444" />
                    <RowHead $last>No View</RowHead>
                    <HeatCell $bg="#bce4d9" $fg="#444" $last>395,000</HeatCell>
                    <HeatCell $bg="#7fc1cb" $fg="#444" $last>625,000</HeatCell>
                  </HeatTable>
                </Panel>
                <Panel>
                  <PanelTitle>Distribution of Bedrooms</PanelTitle>
                  <Histogram
                    vbx={490} w={610} top={724} h={123} c="#4e79a7" axis="#6d8db5" edge="#d4d4d4" freqColor="#4e79a7"
                    yTicks={[["2", 744], ["1", 779], ["0", 814]]} bottom={825}
                    bars={[{ x0: 568, x1: 737, y: 780 }, { x0: 737, x1: 907, y: 780 }, { x0: 907, x1: 1075.5, y: 780 }]}
                    xTicks={[["2.0", 574], ["2.5", 659], ["3.0", 746], ["3.5", 832], ["4.0", 918], ["4.5", 1004], ["5.0", 1090]]}
                    xY={847} yX={531.5} fx={513} fy={778}
                  />
                </Panel>
                <Panel>
                  <PanelTitle>Distribution of Bathrooms</PanelTitle>
                  <Histogram
                    vbx={1110} w={671} top={724} h={123} c="#3b1464" axis="#3b1464" edge="#c9c4d2" gridFrom={1162}
                    grid={[734.5, 765, 794]}
                    yTicks={[["3", 744], ["2", 765], ["1", 794], ["0", 814]]} bottom={825}
                    bars={[{ x0: 1191, x1: 1472, y: 765 }, { x0: 1472, x1: 1753.5, y: 794 }]}
                    xTicks={[["1.6", 1189], ["1.8", 1260], ["2.0", 1330], ["2.2", 1400.7], ["2.4", 1470.5], ["2.6", 1540], ["2.8", 1611], ["3.0", 1680.5], ["3.2", 1751]]}
                    xY={847} yX={1151} fx={1132} fy={778}
                  />
                </Panel>
              </Grid>
            </Main>
          </Body>
        </Page>
        <ScrollTrack>
          <ScrollThumb />
          <ScrollArrow />
        </ScrollTrack>
      </Shell>
    </>
  );
}
